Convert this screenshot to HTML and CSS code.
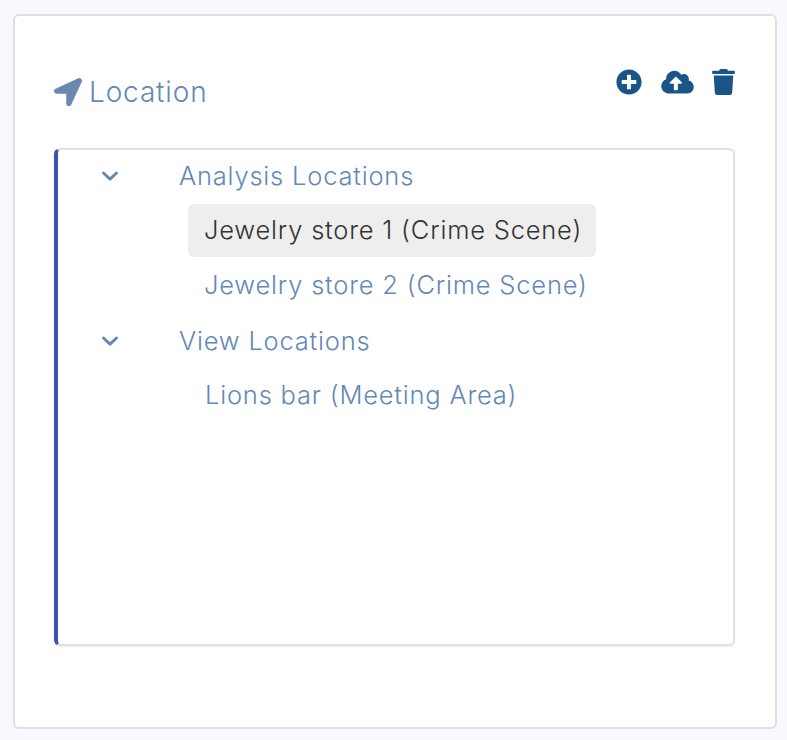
FILE: index.html
```html
<!DOCTYPE html>
<html lang="en">
<head>
  <meta charset="UTF-8">
  <title>Location</title>
  <link rel="stylesheet" href="styles.css">
</head>
<body>
  <div class="card">
    <div class="card-header">
      <div class="title">
        <svg class="title-icon" viewBox="0 0 512 512"><path d="M444.52 3.52L28.74 195.42c-47.97 22.39-31.98 92.75 19.19 92.75h175.91v175.91c0 51.17 70.36 67.17 92.75 19.19l191.9-415.78c15.99-38.39-25.59-79.97-63.97-63.97z"/></svg>
        <span>Location</span>
      </div>
      <div class="actions">
        <svg class="plus" viewBox="0 0 512 512"><path d="M256 8C119 8 8 119 8 256s111 248 248 248 248-111 248-248S393 8 256 8zm144 276c0 6.6-5.4 12-12 12h-92v92c0 6.6-5.4 12-12 12h-56c-6.6 0-12-5.4-12-12v-92h-92c-6.6 0-12-5.4-12-12v-56c0-6.6 5.4-12 12-12h92v-92c0-6.6 5.4-12 12-12h56c6.6 0 12 5.4 12 12v92h92c6.6 0 12 5.4 12 12v56z"/></svg>
        <svg class="cloud" viewBox="0 0 640 512"><path d="M537.6 226.6c4.1-10.7 6.4-22.4 6.4-34.6 0-53-43-96-96-96-19.7 0-38.1 6-53.3 16.2C367 64.2 315.3 32 256 32c-88.4 0-160 71.6-160 160 0 2.7.1 5.4.2 8.1C40.2 219.8 0 273.2 0 336c0 79.5 64.5 144 144 144h368c70.7 0 128-57.3 128-128 0-61.9-44-113.6-102.4-125.4zM393.4 288H328v112c0 8.8-7.2 16-16 16h-48c-8.8 0-16-7.2-16-16V288h-65.4c-14.3 0-21.4-17.2-11.3-27.3l105.4-105.4c6.2-6.2 16.4-6.2 22.6 0l105.4 105.4c10.1 10.1 2.9 27.3-11.3 27.3z"/></svg>
        <svg class="trash" viewBox="0 0 448 512"><path d="M432 32H312l-9.4-18.7A24 24 0 0 0 281.1 0H166.8a23.72 23.72 0 0 0-21.4 13.3L136 32H16A16 16 0 0 0 0 48v32a16 16 0 0 0 16 16h416a16 16 0 0 0 16-16V48a16 16 0 0 0-16-16zM53.2 467a48 48 0 0 0 47.9 45h245.8a48 48 0 0 0 47.9-45L416 128H32z"/></svg>
      </div>
    </div>

    <div class="tree">
      <div class="group">
        <svg class="chevron" viewBox="0 0 18 12"><path d="M2.500 3l6.500 6.200L15.500 3"/></svg>
        <span>Analysis Locations</span>
      </div>
      <div class="leaf selected">Jewelry store 1 (Crime Scene)</div>
      <div class="leaf">Jewelry store 2 (Crime Scene)</div>
      <div class="group">
        <svg class="chevron" viewBox="0 0 18 12"><path d="M2.500 3l6.500 6.200L15.500 3"/></svg>
        <span>View Locations</span>
      </div>
      <div class="leaf">Lions bar (Meeting Area)</div>
    </div>
  </div>
</body>
</html>
```

FILE: styles.css
```css
body {
  margin: 0;
  padding: 14px 10px 11px 13px;
  background-color: #f8f9ff;
  font-family: Inter, "Liberation Sans", sans-serif;
  font-weight: 300;
  color: #6488b8;
  box-sizing: border-box;
  height: 740px;
}

.card {
  box-sizing: border-box;
  width: 764px;
  height: 715px;
  padding: 52px 40px 0 39px;
  background-color: #fff;
  border: 2px solid #e0e0e0;
  border-radius: 6px;
}

.card-header {
  display: flex;
  justify-content: space-between;
  align-items: flex-start;
  height: 80px;
}

.title {
  display: flex;
  align-items: center;
  gap: 7px;
  margin-top: 9px;
  font-size: 28px;
  letter-spacing: 0.85px;
  line-height: 30px;
}

.title-icon {
  width: 28px;
  height: 28px;
  fill: #6b88b0;
}

.actions {
  display: flex;
  gap: 19px;
  margin-top: 1px;
  fill: #1a5489;
}

.actions svg {
  height: 26px;
}

.plus {
  width: 26px;
}

.cloud {
  width: 33px;
  margin-right: -1px;
}

.trash {
  width: 23px;
}

.tree {
  box-sizing: border-box;
  width: 681px;
  height: 498px;
  background-color: #fff;
  border: 2px solid #e0e0e0;
  border-left: 4px solid #3f51b5;
  border-radius: 6px;
  box-shadow: 0 1px 2px rgba(0, 0, 0, 0.08);
  font-size: 25.5px;
  letter-spacing: 0.8px;
}

.group {
  display: flex;
  align-items: center;
  height: 52px;
  margin-bottom: 3px;
}

.group:first-child {
  margin-top: -1px;
}

.chevron {
  width: 18px;
  height: 12px;
  margin: 2px 60px 0 43px;
  fill: none;
  stroke: #6b88b0;
  stroke-width: 3;
  stroke-linecap: round;
  stroke-linejoin: round;
}

.leaf {
  box-sizing: border-box;
  width: 408px;
  height: 53px;
  margin: 0 0 2px 130px;
  padding: 0 16px;
  line-height: 52px;
  border-radius: 6px;
  white-space: nowrap;
}

.leaf:last-child {
  margin-top: 1px;
  padding-left: 17px;
}

.selected {
  background-color: #eeeeee;
  color: #333333;
}
```
